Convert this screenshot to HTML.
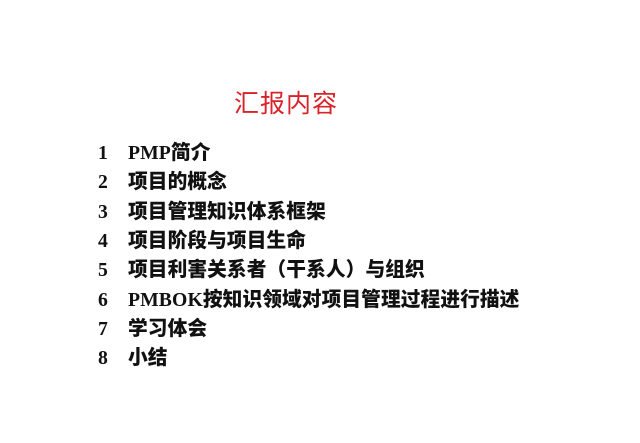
<!DOCTYPE html><html><head><meta charset="utf-8"><style>
body{margin:0;width:640px;height:443px;background:#fff;position:relative;overflow:hidden;font-family:"Liberation Serif","Noto Sans CJK SC",serif}
.t{position:absolute;left:234px;top:84px;font:25px "Liberation Sans","Noto Sans CJK SC",sans-serif;color:#d9232a;letter-spacing:1px}
.r{position:absolute;left:98px;font-weight:bold;font-size:19.7px;color:#111;line-height:22px;white-space:nowrap}
.r span{display:inline-block;width:30px}
.r b{font-family:"Liberation Serif","Noto Sans CJK SC",serif;letter-spacing:0.1px}
</style></head><body>
<div class="t">汇报内容</div>
<div class="r" style="top:142px"><span>1</span><b>PMP简介</b></div>
<div class="r" style="top:171px"><span>2</span><b>项目的概念</b></div>
<div class="r" style="top:201px"><span>3</span><b>项目管理知识体系框架</b></div>
<div class="r" style="top:230px"><span>4</span><b>项目阶段与项目生命</b></div>
<div class="r" style="top:259px"><span>5</span><b>项目利害关系者（干系人）与组织</b></div>
<div class="r" style="top:289px"><span>6</span><b>PMBOK按知识领域对项目管理过程进行描述</b></div>
<div class="r" style="top:318px"><span>7</span><b>学习体会</b></div>
<div class="r" style="top:347px"><span>8</span><b>小结</b></div>
</body></html>
